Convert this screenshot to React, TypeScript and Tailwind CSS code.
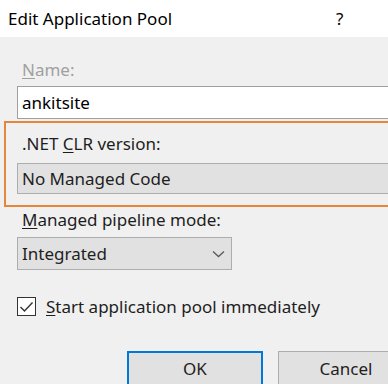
import React from 'react';

const Ul: React.FC<{ children: React.ReactNode }> = ({ children }) => (
  <span className="underline underline-offset-2 decoration-1">{children}</span>
);

const App: React.FC = () => {
  return (
    <div className="w-[388px] h-[384px] overflow-hidden bg-[#f0f0f0] font-['Noto_Sans',sans-serif] text-[17px] text-[#1e1e1e]">
      <div className="w-[440px]">
        {/* title bar */}
        <div className="h-[37px] bg-white flex items-center pl-[8px] text-[17px] text-black">
          <span>Edit Application Pool</span>
          <span className="ml-[164px]">?</span>
        </div>

        <div className="flex flex-col pl-[17px]">
          <div className="mt-[23px] h-[20px] leading-[20px] pl-[5px] text-[#a0a0a0]">
            <Ul>N</Ul>ame:
          </div>
          <div className="mt-[6px] h-[33px] bg-white border border-[#a0a0a0] flex items-center pl-[4px] text-black">
            ankitsite
          </div>
        </div>

        {/* highlighted section */}
        <div className="mt-[2px] ml-[4px] border-2 border-[#e5873a] pt-[11px] pb-[11px] pl-[11px]">
          <div className="h-[20px] leading-[20px] pl-[5px]">
            .NET <Ul>C</Ul>LR version:
          </div>
          <div className="mt-[9px] h-[31px] bg-[#e1e1e1] border border-[#adadad] flex items-center pl-[4px]">
            No Managed Code
          </div>
        </div>

        <div className="flex flex-col pl-[17px]">
          <div className="mt-[3px] h-[20px] leading-[20px] pl-[5px]">
            <Ul>M</Ul>anaged pipeline mode:
          </div>
          <div className="mt-[7px] w-[215px] h-[33px] bg-[#e1e1e1] border border-[#adadad] flex items-center justify-between pl-[4px] pr-[6px]">
            <span>Integrated</span>
            <svg width="13" height="8" viewBox="0 0 13 8" fill="none">
              <path d="M1 1.5 L6.5 6.5 L12 1.5" stroke="#5a5a5a" strokeWidth="1.3" />
            </svg>
          </div>

          <div className="mt-[27px] h-[19px] flex items-center leading-[19px]">
            <div className="w-[19px] h-[19px] shrink-0 border border-[#333333] bg-white flex items-center justify-center">
              <svg width="15" height="12" viewBox="0 0 15 12" fill="none">
                <path d="M1.5 6 L5.5 10 L13.5 1.5" stroke="#333333" strokeWidth="1.4" />
              </svg>
            </div>
            <span className="ml-[10px]">
              <Ul>S</Ul>tart application pool immediately
            </span>
          </div>

          <div className="mt-[35px] flex pl-[110px] gap-[15px]">
            <button className="w-[136px] h-[36px] bg-[#e1e1e1] border-2 border-[#0078d7] flex items-center justify-center text-[17px]">
              OK
            </button>
            <button className="w-[136px] h-[36px] bg-[#e1e1e1] border border-[#adadad] flex items-center justify-center text-[17px]">
              Cancel
            </button>
          </div>
        </div>
      </div>
    </div>
  );
};

export default App;
